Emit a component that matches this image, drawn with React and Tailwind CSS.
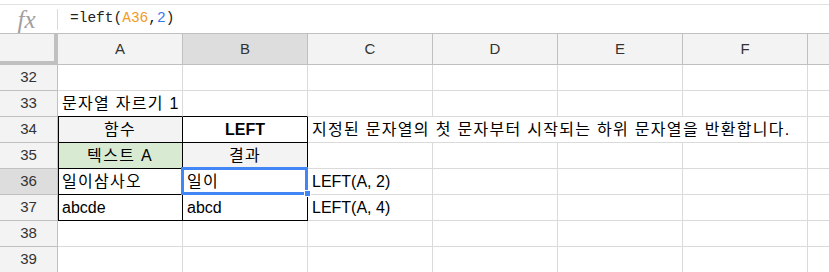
import clsx from 'clsx'

const FONT = "font-['Liberation_Sans','Noto_Sans_CJK_KR',sans-serif]"
const COLS = ['A', 'B', 'C', 'D', 'E', 'F', 'G']

// cell spec per row: A..G; ko = hangul text, drawn a bit wider like the sheet's font
const rows = [
  { n: 32, cells: {} },
  {
    n: 33,
    cells: {
      A: { text: '문자열 자르기 1', ko: true, bb: true },
      B: { bb: true },
    },
  },
  {
    n: 34,
    cells: {
      A: { text: '함수', ko: true, center: true, bg: 'bg-[#f3f3f3]', box: true },
      B: { text: 'LEFT', center: true, bold: true, box: true },
      C: { text: '지정된 문자열의 첫 문자부터 시작되는 하위 문자열을 반환합니다.', ko: true, spill: true, noR: true },
      D: { noR: true },
      E: { noR: true },
    },
  },
  {
    n: 35,
    cells: {
      A: { text: '텍스트 A', ko: true, center: true, bg: 'bg-[#d9ead3]', box: true },
      B: { text: '결과', ko: true, center: true, bg: 'bg-[#f3f3f3]', box: true },
    },
  },
  {
    n: 36,
    active: true,
    cells: {
      A: { text: '일이삼사오', ko: true, box: true },
      B: { text: '일이', ko: true, box: true, selected: true },
      C: { text: 'LEFT(A, 2)' },
    },
  },
  {
    n: 37,
    cells: {
      A: { text: 'abcde', box: true },
      B: { text: 'abcd', box: true },
      C: { text: 'LEFT(A, 4)' },
    },
  },
  { n: 38, cells: {} },
  { n: 39, cells: {} },
]

function FormulaBar() {
  return (
    <div>
      <div className="h-[5px] border-b border-[#e2e2e2]" />
      <div className="flex h-[29px] items-center border-b border-[#c0c0c0]">
        <div className="flex w-[57px] items-center justify-center pr-[4px]">
          <span className="font-['Liberation_Serif',serif] text-[25px] italic leading-none text-[#a0a0a0]">fx</span>
        </div>
        <div className="h-[21px] w-px bg-[#dadada]" />
        <div className="pl-[12px] font-['Liberation_Mono',monospace] text-[14.5px] text-[#222]">
          =left(<span className="text-[#f19a1d]">A36</span>,<span className="text-[#3b78e7]">2</span>)
        </div>
      </div>
    </div>
  )
}

function HeaderRow() {
  // column G is only a sliver at the right edge, its letter falls outside the view
  return (
    <div className="grid h-[31px] grid-cols-[58px_repeat(7,125px)]">
      <div className="border-r-4 border-b-4 border-[#c0c0c0] bg-[#f3f3f3]" />
      {COLS.map((c) => (
        <div
          key={c}
          className={clsx(
            'flex items-center justify-center border-r border-b border-[#c0c0c0] text-[15px] text-[#333]',
            c === 'B' ? 'bg-[#dddddd]' : 'bg-[#f3f3f3]'
          )}
        >
          {c === 'G' ? null : c}
        </div>
      ))}
    </div>
  )
}

function Cell({ spec, col }) {
  const s = spec || {}
  return (
    <div
      className={clsx(
        'relative flex h-[26px] items-center px-[4px] text-[16px] leading-[20px] text-black',
        s.bg,
        s.center && 'justify-center',
        s.bold && 'font-bold',
        s.spill ? 'z-10 whitespace-nowrap overflow-visible' : 'overflow-hidden whitespace-nowrap',
        s.selected && 'z-20 overflow-visible',
        s.noR ? 'border-b border-[#dadada]' : 'border-r border-b',
        !s.noR && (s.box ? 'border-r-black' : 'border-r-[#dadada]'),
        s.box || s.bb ? 'border-b-black' : 'border-b-[#dadada]',
        s.box && col === 'A' && 'shadow-[inset_1px_0_0_#000]'
      )}
    >
      {s.text && <span className={clsx(s.ko && 'tracking-[1.3px]')}>{s.text}</span>}
      {s.selected && (
        <>
          <div className="pointer-events-none absolute -top-[2px] -left-[2px] -right-px -bottom-px border-[3px] border-[#4285f4]" />
          <div className="absolute -right-[4px] -bottom-[3px] h-[7px] w-[7px] border border-white bg-[#4285f4]" />
        </>
      )}
    </div>
  )
}

function DataRow({ row }) {
  return (
    <div className="grid grid-cols-[58px_repeat(7,125px)]">
      <div
        className={clsx(
          'flex h-[26px] items-center justify-center border-r border-b border-[#c0c0c0] text-[15px] text-[#333]',
          row.active ? 'bg-[#dddddd]' : 'bg-[#f3f3f3]'
        )}
      >
        {row.n}
      </div>
      {COLS.map((c) => (
        <Cell key={c} col={c} spec={row.cells[c]} />
      ))}
    </div>
  )
}

export default function App() {
  return (
    <div className={clsx('h-[272px] w-[829px] overflow-hidden bg-white', FONT)}>
      <FormulaBar />
      <HeaderRow />
      {rows.map((row) => (
        <DataRow key={row.n} row={row} />
      ))}
    </div>
  )
}
